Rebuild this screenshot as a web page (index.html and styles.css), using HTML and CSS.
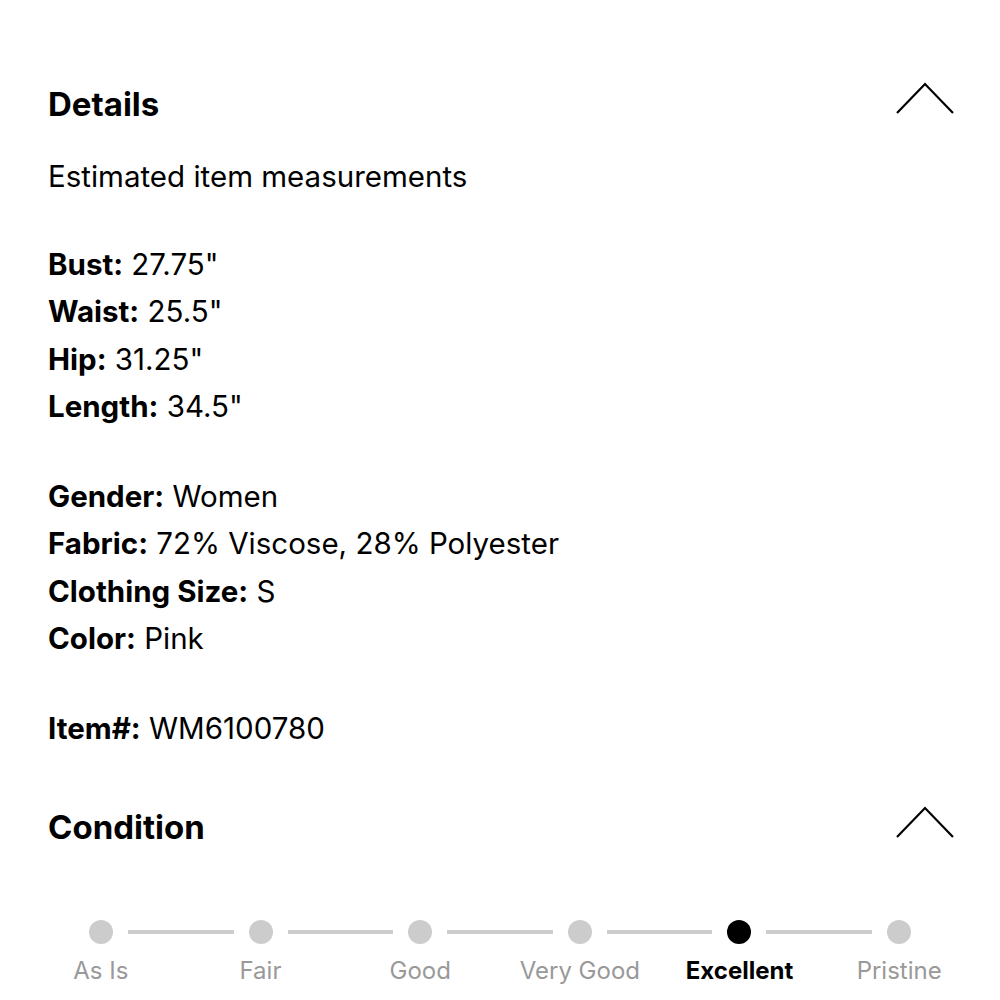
FILE: index.html
```html
<!DOCTYPE html>
<html lang="en">
<head>
    <meta charset="UTF-8">
    <meta name="viewport" content="width=device-width, initial-scale=1.0">
    <title>Item Details</title>
    <link rel="stylesheet" href="styles.css">
</head>
<body>
    <div class="section-head head-details">
        <h2>Details</h2>
        <svg class="chevron" width="58" height="33" viewBox="0 0 58 33">
            <polyline points="1,32 29,3 57,32" fill="none" stroke="#000" stroke-width="2.2"/>
        </svg>
    </div>

    <p class="intro">Estimated item measurements</p>

    <div class="group">
        <p><strong>Bust:</strong> 27.75"</p>
        <p><strong>Waist:</strong> 25.5"</p>
        <p><strong>Hip:</strong> 31.25"</p>
        <p><strong>Length:</strong> 34.5"</p>
    </div>

    <div class="group">
        <p><strong>Gender:</strong> Women</p>
        <p><strong>Fabric:</strong> 72% Viscose, 28% Polyester</p>
        <p><strong>Clothing Size:</strong> S</p>
        <p><strong>Color:</strong> Pink</p>
    </div>

    <div class="group">
        <p><strong>Item#:</strong> WM6100780</p>
    </div>

    <div class="section-head head-condition">
        <h2>Condition</h2>
        <svg class="chevron" width="58" height="33" viewBox="0 0 58 33">
            <polyline points="1,32 29,3 57,32" fill="none" stroke="#000" stroke-width="2.2"/>
        </svg>
    </div>

    <div class="stepper">
        <div class="track">
            <span class="dot"></span><span class="line"></span>
            <span class="dot"></span><span class="line"></span>
            <span class="dot"></span><span class="line"></span>
            <span class="dot"></span><span class="line"></span>
            <span class="dot active"></span><span class="line"></span>
            <span class="dot"></span>
        </div>
        <div class="labels">
            <span>As Is</span>
            <span>Fair</span>
            <span>Good</span>
            <span>Very Good</span>
            <span class="active">Excellent</span>
            <span>Pristine</span>
        </div>
    </div>
</body>
</html>
```

FILE: styles.css
```css
body {
    margin: 0;
    padding: 0 46px 0 48px;
    font-family: Inter, "Liberation Sans", Arial, sans-serif;
    color: #000;
    background: #fff;
}
p {
    margin: 0;
}
.section-head {
    display: flex;
    justify-content: space-between;
    align-items: center;
}
.section-head h2 {
    margin: 0;
    font-size: 33px;
    font-weight: 700;
    line-height: 40px;
}
.head-details {
    margin-top: 84px;
}
.head-details .chevron {
    margin-top: -14px;
}
.head-condition {
    margin-top: 55px;
}
.head-condition .chevron {
    margin-top: -11px;
}
.intro {
    font-size: 29.5px;
    line-height: 47.5px;
    margin-top: 29px;
}
.group {
    margin-top: 42px;
    font-size: 29.5px;
    line-height: 47.5px;
}
.intro + .group {
    margin-top: 40px;
}
.group strong {
    font-weight: 700;
}
.stepper {
    margin: 73px -25px 0 -27px;
}
.track {
    display: flex;
    align-items: center;
    padding: 0 68px;
}
.dot {
    width: 24px;
    height: 24px;
    border-radius: 50%;
    background-color: #cccccc;
    flex: none;
}
.dot.active {
    background-color: #000;
}
.line {
    flex: 1;
    height: 4px;
    margin: 0 15px;
    background-color: #cccccc;
}
.labels {
    display: grid;
    grid-template-columns: repeat(6, 1fr);
    margin-top: 13px;
    font-size: 24px;
    line-height: 28px;
    text-align: center;
    color: #999999;
}
.labels .active {
    color: #000;
    font-weight: 700;
}
```
